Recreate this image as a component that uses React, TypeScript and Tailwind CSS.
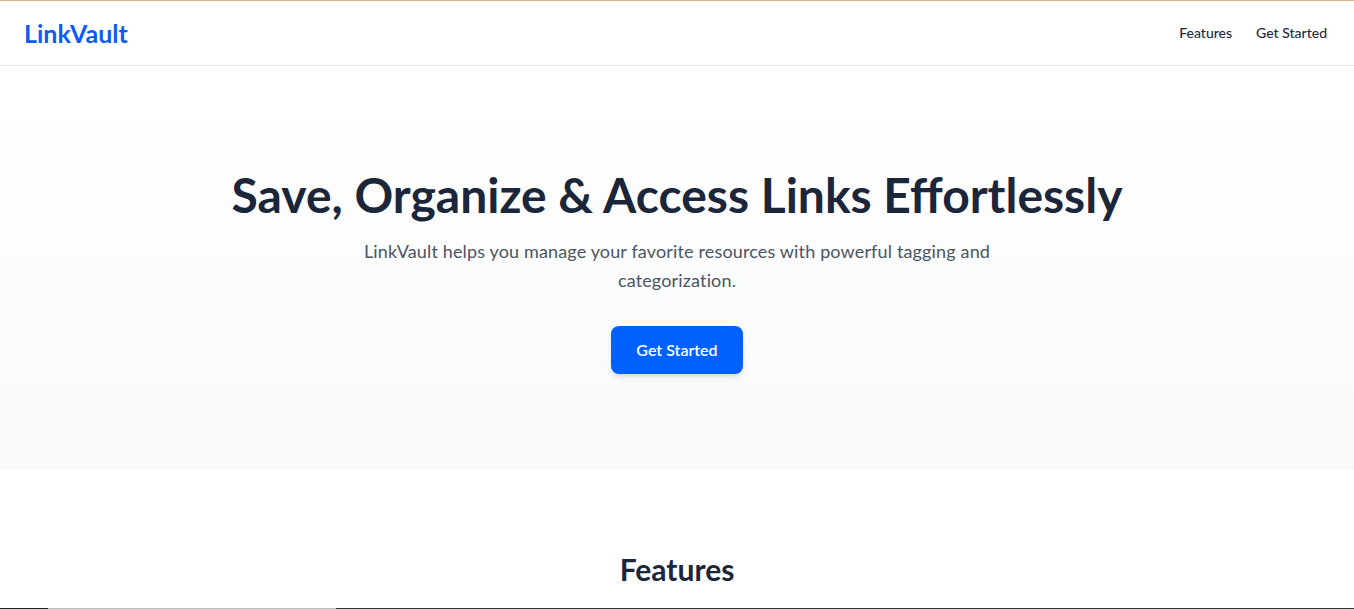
import React from "react";

const font = { fontFamily: '"Segoe UI", Lato, "Noto Sans", sans-serif' };

export default function App() {
  return (
    <div className="min-h-screen bg-white text-slate-800" style={font}>
      <div className="h-px w-full bg-[#d8b28e]" />
      <header className="flex h-[65px] items-center justify-between border-b border-[#e5e7eb] pl-6 pr-[27px]">
        <span className="mt-[1px] text-[25px] font-bold text-[#0a5cf5]">LinkVault</span>
        <nav className="mb-[1px] flex items-center gap-6 text-[14px] font-medium text-[#1e293b]">
          <a href="#features">Features</a>
          <a href="#start">Get Started</a>
        </nav>
      </header>

      <section className="flex flex-col items-center bg-gradient-to-b from-white to-[#f8f9fb] pt-[105px] pb-[96px] text-center">
        <h1 className="text-[48px] font-bold leading-[48px] text-[#1b263b]">
          Save, Organize &amp; Access Links Effortlessly
        </h1>
        <p className="mt-[18px] max-w-[672px] text-[18px] leading-[29px] tracking-[0.15px] text-[#4b5563]">
          LinkVault helps you manage your favorite resources with powerful tagging and categorization.
        </p>
        <button className="mt-[31px] rounded-lg bg-[#0061ff] px-[25px] py-3 text-[16px] font-semibold text-white shadow-md">
          Get Started
        </button>
      </section>

      <section id="features" className="pt-[81px] text-center">
        <h2 className="text-[30px] font-bold leading-[36px] text-[#1b263b]">Features</h2>
        <div className="mt-[21px] flex h-px w-full">
          <div className="w-[48px] bg-[#222]" />
          <div className="w-[288px] bg-[#bdbdbd]" />
          <div className="flex-1 bg-[#333]" />
        </div>
      </section>
    </div>
  );
}
